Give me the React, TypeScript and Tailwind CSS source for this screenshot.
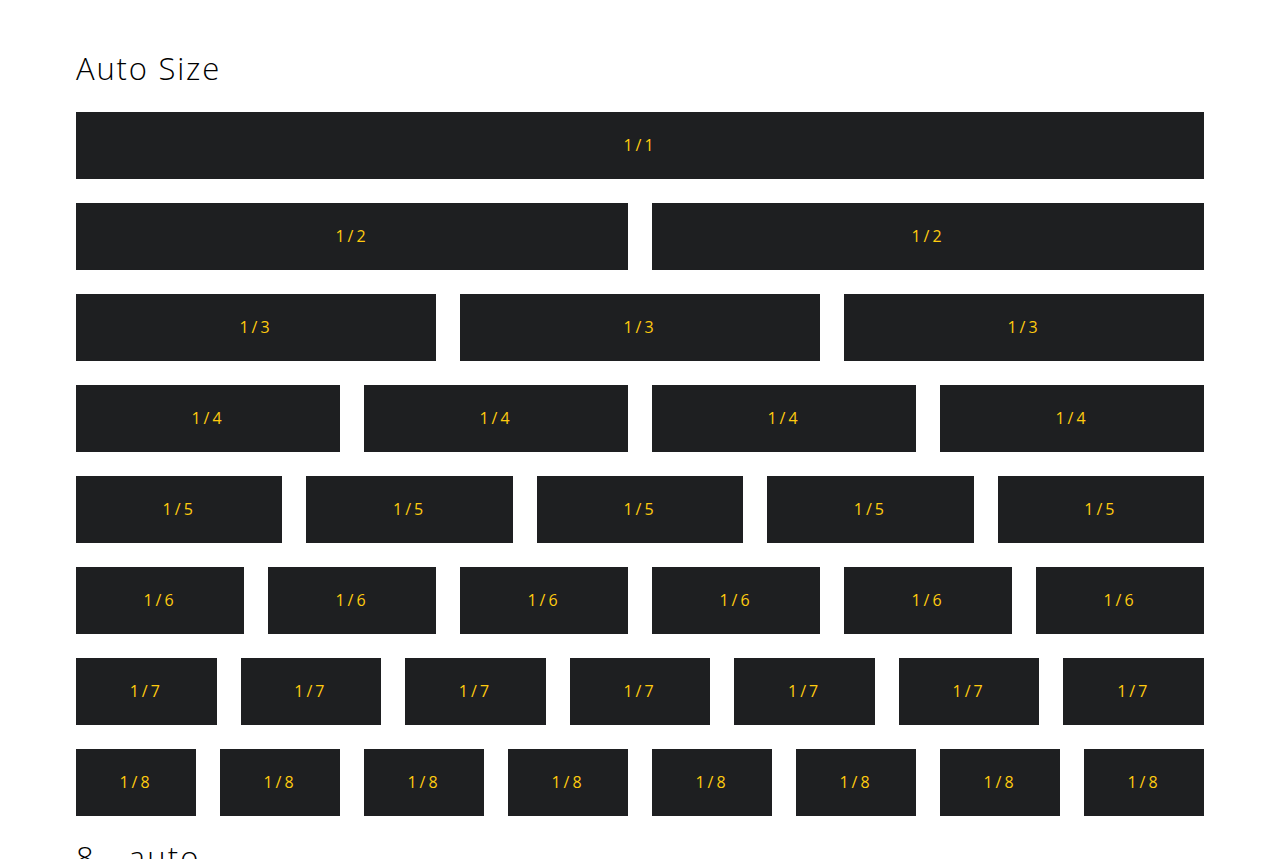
import React from "react";

const rows = [1, 2, 3, 4, 5, 6, 7, 8];

export default function App() {
  return (
    <div className="min-h-[1361px] bg-white px-[76px] pt-[48px] font-['Open_Sans',sans-serif] text-black">
      <h1 className="mb-[24px] h-[40px] text-[31px] font-light leading-[40px] tracking-[1.8px]">Auto Size</h1>
      <div className="flex flex-col gap-[24px]">
        {rows.map((n) => (
          <div key={n} className="flex gap-[24px]">
            {Array.from({ length: n }).map((_, i) => (
              <div
                key={i}
                className="flex h-[67px] flex-1 items-center justify-center bg-[#1e1f21] pb-[2px] text-[16px] tracking-[3px] text-[#ffcb0f]"
              >
                1/{n}
              </div>
            ))}
          </div>
        ))}
      </div>
      <h1 className="mt-[21px] mb-[24px] h-[40px] text-[31px] font-light leading-[40px] tracking-[2.2px]">8 - auto</h1>
      <div className="flex flex-col gap-[24px]">
        {[0, 1, 2, 3].map((r) => (
          <div key={r} className="flex gap-[24px]">
            {Array.from({ length: 8 }).map((_, i) => (
              <div
                key={i}
                className="flex h-[67px] flex-1 items-center justify-center bg-[#1e1f21] pb-[2px] text-[16px] tracking-[3px] text-[#ffcb0f]"
              >
                auto
              </div>
            ))}
          </div>
        ))}
      </div>
    </div>
  );
}
